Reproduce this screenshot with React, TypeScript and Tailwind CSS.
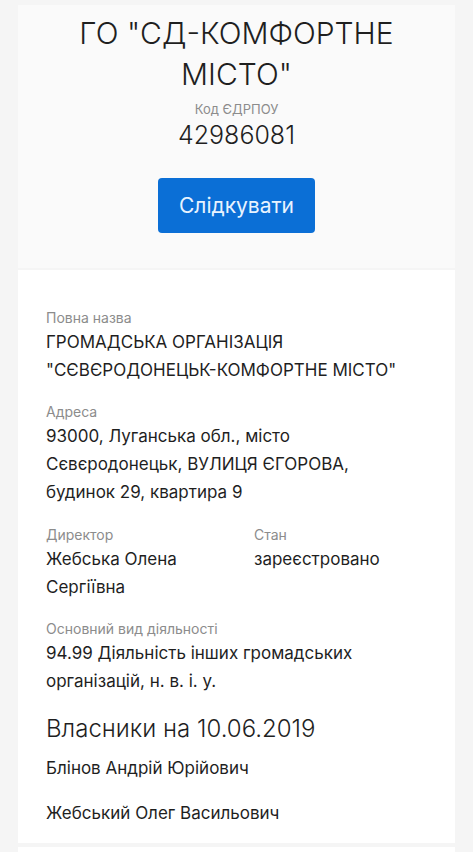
export default function App() {
  return (
    <div className="min-h-screen bg-[#f5f5f5] px-[18px] pt-[5px] text-[#1f1f1f]" style={{ fontFamily: 'Inter, "Noto Sans", sans-serif' }}>
      <div className="flex flex-col items-center bg-[#fafafa] pt-[8px] pb-[35px] text-center">
        <h1 className="w-[340px] text-[30px] font-light leading-[41px]">ГО "СД-КОМФОРТНЕ МІСТО"</h1>
        <div className="mt-[5px] text-[13px] leading-[18px] text-[#8c8c8c]">Код ЄДРПОУ</div>
        <div className="mt-[2px] text-[25px] font-light leading-[30px]">42986081</div>
        <button className="mt-[28px] h-[55px] w-[157px] rounded-[4px] bg-[#0b6fd6] text-[21px] text-[#e8f3ff]">
          Слідкувати
        </button>
      </div>

      <div className="mt-[2px] bg-white px-[28px] pt-[38px] pb-[16px]">
        <Field label="Повна назва">
          ГРОМАДСЬКА ОРГАНІЗАЦІЯ<br />"СЄВЄРОДОНЕЦЬК-КОМФОРТНЕ МІСТО"
        </Field>
        <Field label="Адреса" className="mt-[18px]">
          93000, Луганська обл., місто<br />Сєвєродонецьк, ВУЛИЦЯ ЄГОРОВА,<br />будинок 29, квартира 9
        </Field>
        <div className="mt-[19px] grid grid-cols-[208px_1fr]">
          <Field label="Директор">Жебська Олена<br />Сергіївна</Field>
          <Field label="Стан">зареєстровано</Field>
        </div>
        <Field label="Основний вид діяльності" className="mt-[18px]">
          94.99 Діяльність інших громадських<br />організацій, н. в. і. у.
        </Field>
        <h2 className="mt-[18px] text-[24px] font-light leading-[32px]">Власники на 10.06.2019</h2>
        <div className="mt-[9px] text-[17px] leading-[28px]">Блінов Андрій Юрійович</div>
        <div className="mt-[17px] text-[17px] leading-[28px]">Жебський Олег Васильович</div>
      </div>

      <div className="mt-[4px] h-[20px] bg-white" />
    </div>
  )
}

function Field({ label, children, className = '' }: { label: string; children: React.ReactNode; className?: string }) {
  return (
    <div className={className}>
      <div className="text-[14px] leading-[20px] text-[#8c8c8c]">{label}</div>
      <div className="whitespace-nowrap text-[17px] leading-[28px]">{children}</div>
    </div>
  )
}
